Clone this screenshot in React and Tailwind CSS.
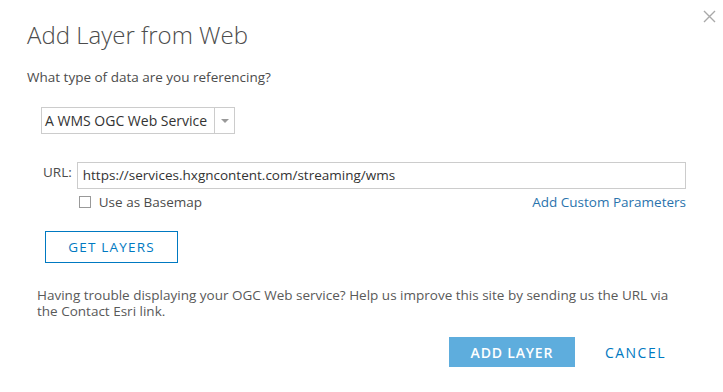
export default function App() {
  return (
    <div className="relative w-[723px] h-[392px] bg-white text-[#4c4c4c]" style={{ fontFamily: '"Open Sans", Lato, sans-serif' }}>
      <button className="absolute right-[6px] top-[8px] w-[16px] h-[16px] flex items-center justify-center">
        <svg width="13" height="13" viewBox="0 0 13 13" stroke="#a9a9a9" strokeWidth="1.4">
          <path d="M1 1 L12 12 M12 1 L1 12" />
        </svg>
      </button>
      <div className="pl-[27px] pr-[37px] pt-[19px]">
        <h1 className="text-[24px] font-light leading-[32px] text-[#4c4c4c]">Add Layer from Web</h1>
        <p className="mt-[17px] text-[13.5px] leading-[18px]">What type of data are you referencing?</p>

        <div className="ml-[14px] mt-[21px] flex w-[194px] h-[27px] border border-[#cccccc]">
          <span className="flex-1 pl-[3px] text-[14px] leading-[25px] text-[#333] whitespace-nowrap">A WMS OGC Web Service</span>
          <span className="w-[20px] border-l border-[#cccccc] flex items-center justify-center">
            <svg width="8" height="4" viewBox="0 0 8 4"><path d="M0 0 H8 L4 4 Z" fill="#999" /></svg>
          </span>
        </div>

        <div className="ml-[16px] mt-[28px] flex items-start gap-[5px]">
          <span className="text-[13.5px] leading-[18px] pt-[1px]">URL:</span>
          <div className="flex-1 flex flex-col">
            <div className="h-[27px] border border-[#cccccc] pl-[5px] text-[13.5px] leading-[24px] text-[#333]">
              https://services.hxgncontent.com/streaming/wms
            </div>
            <div className="mt-[5px] flex items-center justify-between">
              <label className="flex items-center gap-[8px] pl-[2px] text-[13.5px] leading-[16px]">
                <span className="w-[12px] h-[12px] border border-[#999] bg-white" />
                Use as Basemap
              </label>
              <a className="text-[13.5px] leading-[16px] text-[#2a73ad]">Add Custom Parameters</a>
            </div>
          </div>
        </div>

        <button className="ml-[18px] mt-[21px] w-[133px] h-[32px] border border-[#0079c1] text-[#0079c1] text-[13.5px] tracking-[1.2px] uppercase">
          Get Layers
        </button>

        <p className="ml-[10px] mt-[24px] w-[640px] text-[13.5px] leading-[16px] text-[#595959]">
          Having trouble displaying your OGC Web service? Help us improve this site by sending us the URL via the Contact Esri link.
        </p>

        <div className="mt-[18px] flex items-center justify-end gap-[30px] pr-[20px]">
          <button className="w-[126px] h-[30px] bg-[#5eaddd] text-white text-[14px] font-semibold tracking-[0.8px] uppercase">
            Add Layer
          </button>
          <button className="text-[#0079c1] text-[14px] tracking-[1.5px] uppercase">Cancel</button>
        </div>
      </div>
    </div>
  )
}
